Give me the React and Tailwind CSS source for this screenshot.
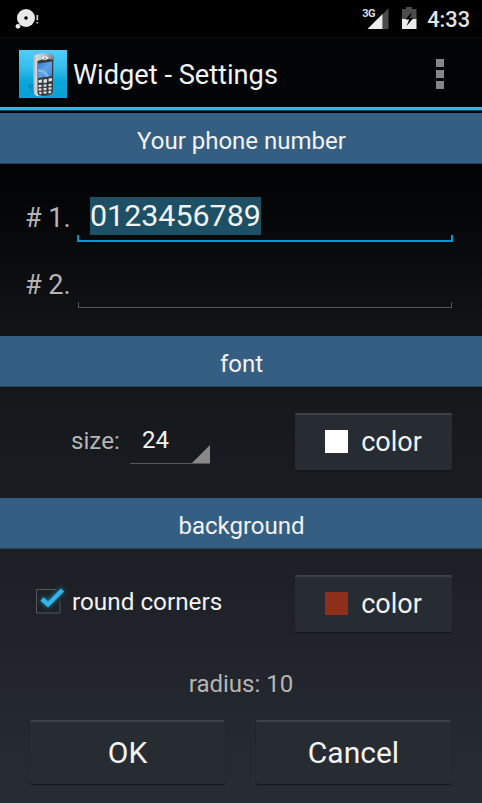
import React from "react";

const SectionHeader = ({ children }) => (
  <h2 className="h-[51px] shrink-0 bg-[#345f83] border-b border-[#26435c] pl-px text-center text-[24px] leading-[56px] text-[#f3f3f3]">
    {children}
  </h2>
);

const HoloButton = ({ className, children }) => (
  <button
    className={`flex items-center justify-center rounded-[2px] border-t-2 border-[#3b4144] bg-[#272c33] text-[#f3f3f3] shadow-[0_1px_1px_#121518] ${className}`}
  >
    {children}
  </button>
);

const ColorButton = ({ swatch }) => (
  <HoloButton className="h-[57px] w-[157px] gap-[13px] text-[27px]">
    <span className={`mb-[3px] size-[23px] ${swatch}`} />
    color
  </HoloButton>
);

/* Notification and system icons */
const StatusBar = () => (
  <div className="flex h-[38px] shrink-0 items-start justify-between border-b border-[#0c0c0c] bg-black">
    <svg className="ml-[15px] mt-2 h-[21px] w-6" viewBox="0 0 24 21">
      <circle cx="11" cy="10" r="9" fill="#e8e8e8" />
      <circle cx="11" cy="10" r="1.8" fill="#000" />
      <circle cx="3" cy="18.3" r="2.4" fill="#e8e8e8" />
      <path d="M22.300 7v5.300M22.300 14v1.600" stroke="#c8c8c8" strokeWidth="1.8" />
    </svg>
    <div className="flex items-start">
      <span className="mt-[7px] w-[14px] text-[11px] font-bold leading-[13px] tracking-[-0.5px] text-[#dcdcdc]">
        3G
      </span>
      <svg className="-ml-[9px] mt-2 h-[21px] w-[23px]" viewBox="0 0 23 21">
        <path d="M15.500 6.500L21.500 0v21h-6z" fill="#4c4c4c" />
        <path d="M.5 21l15-15v15z" fill="#ececec" />
      </svg>
      <svg className="ml-3 mt-[7px] h-[22px] w-[15px]" viewBox="0 0 15 22">
        <path d="M0 2h4V0h6v2h4.500v10H0z" fill="#4c4c4c" />
        <path d="M0 12h14.500v10H0z" fill="#ececec" />
        <path d="M10 5L3.500 12.500h3.700L4.500 19l7-8H7.700z" fill="#000" />
      </svg>
      <span className="ml-[10px] mr-3 mt-[7px] text-[21.700px] font-medium leading-[26px] text-[#e4e4e4]">
        4:33
      </span>
    </div>
  </div>
);

const PhoneIcon = () => (
  <svg className="size-12" viewBox="0 0 48 48">
    <defs>
      <linearGradient id="sky" x1="0" y1="0" x2="0" y2="1">
        <stop offset="0" stopColor="#50ccf8" />
        <stop offset="0.35" stopColor="#35bfed" />
        <stop offset="0.65" stopColor="#0aa7da" />
        <stop offset="1" stopColor="#08a0d5" />
      </linearGradient>
      <linearGradient id="body" x1="0" y1="0" x2="1" y2="0">
        <stop offset="0" stopColor="#a4a8ac" />
        <stop offset="0.15" stopColor="#d8d8da" />
        <stop offset="0.6" stopColor="#b8babd" />
        <stop offset="1" stopColor="#777b80" />
      </linearGradient>
      <linearGradient id="screen" x1="0" y1="0" x2="1" y2="1">
        <stop offset="0" stopColor="#3277cf" />
        <stop offset="0.5" stopColor="#5fa3e4" />
        <stop offset="1" stopColor="#3983d8" />
      </linearGradient>
    </defs>
    <path d="M0 0h48v48H0z" fill="url(#sky)" />
    <path d="M8.500 35l6-1v10z" fill="#0a8dbf" />
    <path
      d="M14 9q0-3.500 3-4.300Q24 2 31 4q4 1 4 4v32q0 4-3.500 5Q25 47 18 46q-3-1-3.500-4z"
      fill="url(#body)"
    />
    <path
      d="M18.500 11q7-3 15.500-1.500v32q-1 3-3 3.500-6 1.500-10 .5-2.500-.5-2.500-3z"
      fill="#353940"
    />
    <path d="M19 13.500l14-2v14.500L19 28z" fill="url(#screen)" />
    <path d="M19 19q8 0 11 7.300l-3 .4q-2-5-8-5z" fill="#82b9ed" />
    <ellipse cx="26" cy="8" rx="3" ry="1.800" fill="#f0f0f0" />
    <ellipse cx="26" cy="8.200" rx="1.200" ry="0.800" fill="#777" />
    <g fill="#dedfe0">
      <path d="M19.500 30l3.500-.5v3l-3.500.5zM24.500 29.500l3.500-.5v3.500l-3.500.5zM29.500 28.500l3.500-.5v3l-3.500.5z" />
      <path d="M19.500 35l3-.3v2.300l-3 .3zM24.500 34.500l3-.3v2.300l-3 .3zM29.500 34l3-.3V36l-3 .3z" />
      <path d="M19.500 38.500l3-.3v2.300l-3 .3zM24.500 38l3-.3V40l-3 .3zM29.500 37.500l3-.3v2.300l-3 .3z" />
      <path d="M20 42l2.500-.3V44l-2 .2zM24.500 41.500l3-.3v2.300l-3 .3zM29.500 41l3-.3-.8 2.500-2.200.3z" />
    </g>
  </svg>
);

const ActionBar = () => (
  <header className="flex h-[75px] shrink-0 flex-col bg-black">
    <div className="flex h-[69px] items-center bg-[#030405] pl-[19px] pr-[38px] pt-0.5">
      <PhoneIcon />
      <h1 className="ml-[6px] grow pt-[3px] text-[27.200px] leading-8 text-[#f3f3f3]">
        Widget - Settings
      </h1>
      <div className="flex flex-col gap-[3px]" aria-label="More options">
        <span className="size-2 bg-[#868686]" />
        <span className="size-2 bg-[#868686]" />
        <span className="size-2 bg-[#868686]" />
      </div>
    </div>
    <div className="h-1 border-b border-[#0f4c60] bg-[#33b5e5]" />
  </header>
);

export default function App() {
  return (
    <div className="flex h-[803px] w-[482px] flex-col overflow-hidden bg-linear-to-b from-black via-[#121518] via-42% to-[#282c34] font-[Roboto,sans-serif]">
      <StatusBar />
      <ActionBar />

      {/* Phone numbers */}
      <SectionHeader>Your phone number</SectionHeader>
      <section className="h-[172px] shrink-0 pl-[25px] pr-[29px] pt-[33px] text-[27px] text-[#b5b5b5]">
        <div className="flex h-[45px]">
          <label className="w-[52px] shrink-0 pt-[5px] leading-8"># 1.</label>
          <div className="flex grow flex-col">
            <div className="h-[38px] pl-[13px]">
              <span className="inline-block h-[38px] bg-[#1d5064] text-[30.400px] leading-[38px] text-[#f3f3f3]">
                0123456789
              </span>
            </div>
            <div className="h-[7px] border-2 border-t-0 border-[#0099cc]" />
          </div>
        </div>
        <div className="mt-[21px] flex h-[45px]">
          <label className="w-[53px] shrink-0 pt-[6px] leading-8"># 2.</label>
          <div className="mr-px mt-[39px] h-[6px] grow border border-t-0 border-[#555658]" />
        </div>
      </section>

      {/* Font */}
      <SectionHeader>font</SectionHeader>
      <section className="flex h-[111px] shrink-0 items-start pl-[71px] pr-[30px] pt-[26px]">
        <span className="mt-3 w-[59px] text-[24.200px] leading-8 text-[#b5b5b5]">
          size:
        </span>
        <div className="mt-[10px] flex h-[41px] w-[80px] items-end justify-between border-b border-[#55585a] pl-[12px]">
          <span className="mb-[7px] text-[24px] leading-8 text-[#f3f3f3]">
            24
          </span>
          <svg className="size-[18px]" viewBox="0 0 18 18">
            <path d="M18 0v18H0z" fill="#888" />
          </svg>
        </div>
        <div className="ml-auto">
          <ColorButton swatch="bg-white" />
        </div>
      </section>

      {/* Background */}
      <SectionHeader>background</SectionHeader>
      <section className="flex grow flex-col">
        <div className="flex items-start pl-[34px] pr-[30px] pt-[26px]">
          <svg className="mt-[9px] h-[34px] w-[36px]" viewBox="0 0 36 34">
            <path
              d="M22 5.500H2.500v23.500H26V17"
              fill="none"
              stroke="#55595c"
            />
            <path
              d="M8 14.500l6 5.500L28.500 5.500"
              className="blur-[2px]"
              fill="none"
              stroke="#14708f"
              strokeWidth="6"
            />
            <path
              d="M8 15l6 5.500L28.500 6"
              fill="none"
              stroke="#33b5e5"
              strokeWidth="4.500"
            />
          </svg>
          <span className="ml-0.5 mt-[11px] text-[24.300px] leading-8 text-[#f3f3f3]">
            round corners
          </span>
          <div className="ml-auto">
            <ColorButton swatch="bg-[#8f2e1b]" />
          </div>
        </div>
        <p className="mt-[36px] text-center text-[24px] leading-8 text-[#b5b5b5]">
          radius: 10
        </p>
        <div className="mt-5 flex gap-[31px] pl-[30px]">
          <HoloButton className="h-[64px] w-[195px] pb-0.5 text-[30px]">
            OK
          </HoloButton>
          <HoloButton className="h-[64px] w-[195px] pb-0.5 text-[30px]">
            Cancel
          </HoloButton>
        </div>
      </section>
    </div>
  );
}
